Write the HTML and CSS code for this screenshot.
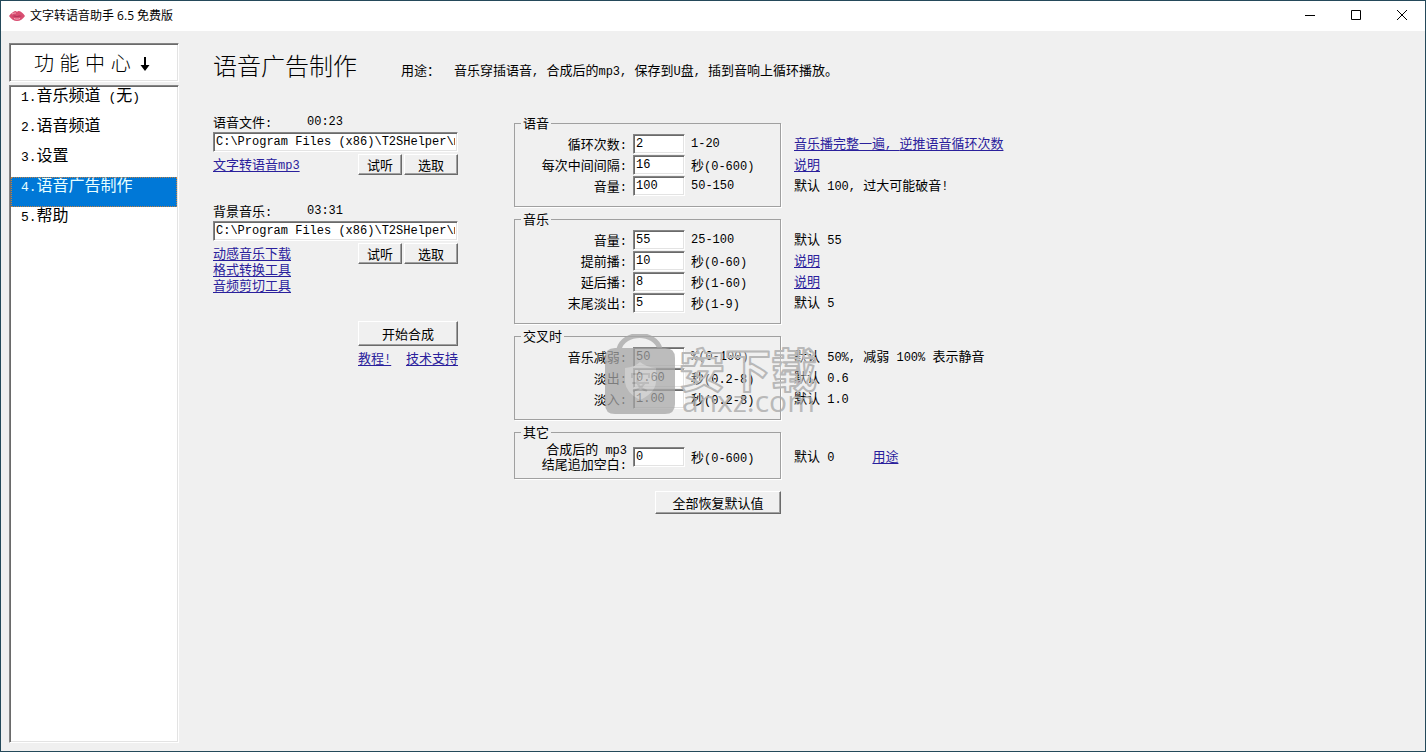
FILE: index.html
```html
<!DOCTYPE html>
<html lang="zh-CN">
<head>
<meta charset="utf-8">
<title>文字转语音助手 6.5 免费版</title>
<link rel="stylesheet" href="styles.css">
</head>
<body>
<div class="window">
  <header class="titlebar">
    <svg class="lips" viewBox="0 0 16 12" aria-hidden="true">
      <path d="M0 6C2 3 5 1 7 1L8 2 9 1C12 1 14 3 16 6 14 9 11 11 8 11S2 9 0 6Z" fill="#d94f72"/>
      <path d="M3 6C5 5.500 6 5 8 6 10 5 11 5.500 13 6 11 7 5 7 3 6Z" fill="#a83258"/>
      <path d="M3 4C5 3 6 3 7 3M5 8.500C7 9.300 9 9.300 11 8.500" fill="none" stroke="#f4aec0"/>
    </svg>
    <span class="caption">文字转语音助手 6.5 免费版</span>
    <button class="winbtn" aria-label="最小化"><svg viewBox="0 0 12 12"><path d="M1 6.500H11"/></svg></button>
    <button class="winbtn" aria-label="最大化"><svg viewBox="0 0 12 12"><path d="M1.500 1.500H10.500V10.500H1.500Z"/></svg></button>
    <button class="winbtn" aria-label="关闭"><svg viewBox="0 0 12 12"><path d="M1 1L11 11M11 1L1 11"/></svg></button>
  </header>
  <div class="body">
    <aside class="sidebar">
      <div class="menu-title">功 能 中 心
        <svg viewBox="0 0 10 16" aria-hidden="true"><path d="M4 1H6V9H9.500L5 15 .5 9H4Z" fill="#000"/></svg>
      </div>
      <nav class="menu">
        <a href="#m1"><span class="n">1.</span>音乐频道<span class="n"> (</span>无<span class="n">)</span></a>
        <a href="#m2"><span class="n">2.</span>语音频道</a>
        <a href="#m3"><span class="n">3.</span>设置</a>
        <a href="#m4" class="selected"><span class="n">4.</span>语音广告制作</a>
        <a href="#m5"><span class="n">5.</span>帮助</a>
      </nav>
    </aside>
    <main class="main">
      <div class="heading">
        <h1>语音广告制作</h1>
        <p><span class="usage">用途：</span>音乐穿插语音<span class="n">, </span>合成后的<span class="n">mp3, </span>保存到<span class="n">U</span>盘<span class="n">, </span>插到音响上循环播放。</p>
      </div>
      <div class="columns">
        <section class="files">
          <div class="file">
            <div class="file-label"><label for="voice">语音文件<span class="n">:</span></label><span class="n">00:23</span></div>
            <input id="voice" type="text" value="C:\Program Files (x86)\T2SHelper\my">
            <div class="file-actions">
              <div class="links"><a href="#tts">文字转语音<span class="n">mp3</span></a></div>
              <button class="btn listen">试听</button><button class="btn pick">选取</button>
            </div>
          </div>
          <div class="file">
            <div class="file-label"><label for="music">背景音乐<span class="n">:</span></label><span class="n">03:31</span></div>
            <input id="music" type="text" value="C:\Program Files (x86)\T2SHelper\my">
            <div class="file-actions">
              <div class="links"><a href="#dl">动感音乐下载</a><a href="#cv">格式转换工具</a><a href="#cut">音频剪切工具</a></div>
              <button class="btn listen">试听</button><button class="btn pick">选取</button>
            </div>
          </div>
          <div class="start">
            <button class="btn">开始合成</button>
            <div class="help"><a href="#guide">教程<span class="n">!</span></a><a href="#support">技术支持</a></div>
          </div>
        </section>
        <section class="settings">
          <div class="group">
            <fieldset><legend>语音</legend>
              <label for="a1">循环次数<span class="n">:</span></label><input id="a1" type="text" value="2"><span class="n">1-20</span>
              <label for="a2">每次中间间隔<span class="n">:</span></label><input id="a2" type="text" value="16"><span>秒<span class="n">(0-600)</span></span>
              <label for="a3">音量<span class="n">:</span></label><input id="a3" type="text" value="100"><span class="n">50-150</span>
            </fieldset>
            <div class="notes">
              <p><a href="#n1">音乐播完整一遍<span class="n">, </span>逆推语音循环次数</a></p>
              <p><a href="#n2">说明</a></p>
              <p>默认<span class="n"> 100, </span>过大可能破音<span class="n">!</span></p>
            </div>
          </div>
          <div class="group">
            <fieldset><legend>音乐</legend>
              <label for="b1">音量<span class="n">:</span></label><input id="b1" type="text" value="55"><span class="n">25-100</span>
              <label for="b2">提前播<span class="n">:</span></label><input id="b2" type="text" value="10"><span>秒<span class="n">(0-60)</span></span>
              <label for="b3">延后播<span class="n">:</span></label><input id="b3" type="text" value="8"><span>秒<span class="n">(1-60)</span></span>
              <label for="b4">末尾淡出<span class="n">:</span></label><input id="b4" type="text" value="5"><span>秒<span class="n">(1-9)</span></span>
            </fieldset>
            <div class="notes">
              <p>默认<span class="n"> 55</span></p>
              <p><a href="#n3">说明</a></p>
              <p><a href="#n4">说明</a></p>
              <p>默认<span class="n"> 5</span></p>
            </div>
          </div>
          <div class="group">
            <fieldset><legend>交叉时</legend>
              <label for="c1">音乐减弱<span class="n">:</span></label><input id="c1" type="text" value="50"><span class="n">%(0-100)</span>
              <label for="c2">淡出<span class="n">:</span></label><input id="c2" type="text" value="0.60"><span>秒<span class="n">(0.2-8)</span></span>
              <label for="c3">淡入<span class="n">:</span></label><input id="c3" type="text" value="1.00"><span>秒<span class="n">(0.2-8)</span></span>
            </fieldset>
            <div class="notes">
              <p>默认<span class="n"> 50%, </span>减弱<span class="n"> 100% </span>表示静音</p>
              <p>默认<span class="n"> 0.6</span></p>
              <p>默认<span class="n"> 1.0</span></p>
            </div>
            <svg class="watermark" viewBox="0 0 216 84" aria-hidden="true">
              <g opacity=".75">
                <path d="M15 15C20 -3 51 -3 56 15" fill="none" stroke="#a6a6a6" stroke-width="5"/>
                <path fill="#a6a6a6" d="M11 14H61Q71 14 71 24V70Q71 80 61 80H11Q1 80 1 70V24Q1 14 11 14Z"/>
                <path fill="#c2c2c2" d="M36 28Q42 33 52 34V48Q51 59 36 66 22 59 21 48V34Q31 33 36 28Z"/>
                <path fill="none" stroke="#a6a6a6" stroke-width="2" d="M28 44V40H45V44M35 36V40M28 49H45M34 44Q31 52 43 57M41 48Q39 54 29 57"/>
              </g>
              <text class="wm-cn" x="75" y="53">安下载</text>
              <text class="wm-en" x="78" y="78">anxz.com</text>
            </svg>
          </div>
          <div class="group">
            <fieldset class="tall"><legend>其它</legend>
              <label for="d1">合成后的<span class="n"> mp3</span><br>结尾追加空白<span class="n">:</span></label><input id="d1" type="text" value="0"><span>秒<span class="n">(0-600)</span></span>
            </fieldset>
            <div class="notes tall"><p>默认<span class="n"> 0</span><a class="use" href="#n5">用途</a></p></div>
          </div>
          <button class="btn reset">全部恢复默认值</button>
        </section>
      </div>
    </main>
  </div>
</div>
</body>
</html>
```
FILE: styles.css
```css
* { box-sizing: border-box; }
body {
  margin: 0;
  background: #f0f0f0;
  color: #000;
  font: 13px/16px "Noto Sans CJK SC", sans-serif;
}
h1, p { margin: 0; font-weight: 400; }
a { color: #2a209c; text-decoration: underline; text-underline-offset: 2px; }
.n { font: 12px/12px "Liberation Mono", monospace; white-space: pre; }
.window {
  display: flex;
  flex-direction: column;
  min-height: 100vh;
  border: 1px solid #24495a;
}
.titlebar {
  display: flex;
  align-items: center;
  height: 30px;
  padding-left: 8px;
  background: #fff;
}
.lips { width: 16px; height: 12px; margin-right: 5px; }
.caption {
  flex: 1;
  font: 12px/16px "Open Sans", "Noto Sans CJK SC", sans-serif;
}
.winbtn {
  width: 46px;
  height: 30px;
  padding: 0;
  border: 0;
  background: none;
}
.winbtn svg { width: 12px; height: 12px; fill: none; stroke: #000; }
.body { display: flex; flex: 1; padding: 12px 8px 8px; }
.sidebar { display: flex; flex-direction: column; gap: 3px; width: 170px; }
.menu-title, .menu, input {
  border: 1px solid;
  border-color: #858585 #fff #fff #858585;
  background: #fff;
  box-shadow: inset 1px 1px 0 #6a6a6a, inset -1px -1px 0 #e3e3e3;
}
.menu-title {
  display: flex;
  align-items: center;
  gap: 9px;
  height: 39px;
  padding: 2px 0 0 24px;
  font: 20px/30px "Liberation Sans", "Noto Sans CJK SC", sans-serif;
  font-weight: 300;
}
.menu-title svg { width: 10px; height: 16px; }
.menu { flex: 1; padding: 1px; }
.menu a {
  display: block;
  height: 30px;
  padding-left: 10px;
  color: #000;
  font-size: 16px;
  line-height: 15px;
  text-decoration: none;
}
.menu .n { font-size: 13px; }
.menu .selected {
  background: #0078d7;
  color: #e8ffff;
  outline: 1px dotted #c08040;
  outline-offset: -1px;
}
.main { flex: 1; padding: 6px 0 0 34px; }
.heading { display: flex; align-items: center; gap: 44px; height: 65px; padding-bottom: 32px; }
h1 { font-size: 24px; line-height: 32px; font-weight: 300; padding-bottom: 2px; }
.heading p { padding-top: 8px; }
.usage { margin-right: 14px; }
.columns { display: flex; align-items: flex-start; gap: 56px; }
.files { display: flex; flex-direction: column; gap: 28px; width: 245px; }
.file { display: flex; flex-direction: column; gap: 2px; }
.file-label { display: flex; align-items: center; height: 16px; }
.file-label label { width: 94px; }
input {
  width: 100%;
  height: 20px;
  padding: 0 2px;
  color: #000;
  font: 12px/16px "Liberation Mono", monospace;
}
.file-actions { display: flex; align-items: flex-start; gap: 2px; }
.links { display: flex; flex: 1; flex-direction: column; align-items: flex-start; padding-top: 2px; }
.links a { height: 16px; }
.btn {
  height: 21px;
  padding: 0;
  border: 1px solid;
  border-color: #fff #6a6a6a #6a6a6a #fff;
  background: #f0f0f0;
  box-shadow: inset -1px -1px 0 #a0a0a0;
  color: #000;
  font: 13px/16px "Noto Sans CJK SC", sans-serif;
}
.listen { width: 44px; }
.pick { width: 54px; }
.start { width: 100px; margin-left: auto; }
.start .btn { width: 100%; height: 25px; margin-bottom: 4px; }
.help { display: flex; justify-content: space-between; }
.settings { display: flex; flex: 1; flex-direction: column; gap: 6px; padding-top: 3px; }
.group { position: relative; display: flex; gap: 13px; }
fieldset {
  display: grid;
  grid-template-columns: 112px 52px 1fr;
  grid-auto-rows: 21px;
  column-gap: 6px;
  align-items: center;
  width: 267px;
  min-width: 0;
  margin: 0;
  padding: 4px 0 10px;
  border: 1px solid #a0a0a0;
  box-shadow: 1px 1px 0 #fff;
}
fieldset label { text-align: right; }
legend { height: 12px; margin-left: 6px; padding: 0 2px; line-height: 12px; }
fieldset.tall { grid-auto-rows: 30px; padding-bottom: 6px; }
.tall label { line-height: 13px; }
.notes { padding-top: 16px; white-space: nowrap; }
.notes p { height: 21px; line-height: 19px; }
.notes.tall p { height: 30px; line-height: 28px; }
.use { margin-left: 38px; }
.watermark {
  position: absolute;
  top: 4px;
  left: 90px;
  width: 216px;
  height: 84px;
  pointer-events: none;
}
.wm-cn {
  font: 700 46px "Noto Sans CJK SC", sans-serif;
  fill: #f0f0f0;
  fill-opacity: .4;
  stroke: #b8b8b8;
  stroke-width: 2;
  stroke-linejoin: round;
}
.wm-en { font: 500 30px "Open Sans", sans-serif; fill: #aaa; fill-opacity: .8; }
.reset { width: 126px; height: 23px; margin: 6px 0 0 141px; }
```
